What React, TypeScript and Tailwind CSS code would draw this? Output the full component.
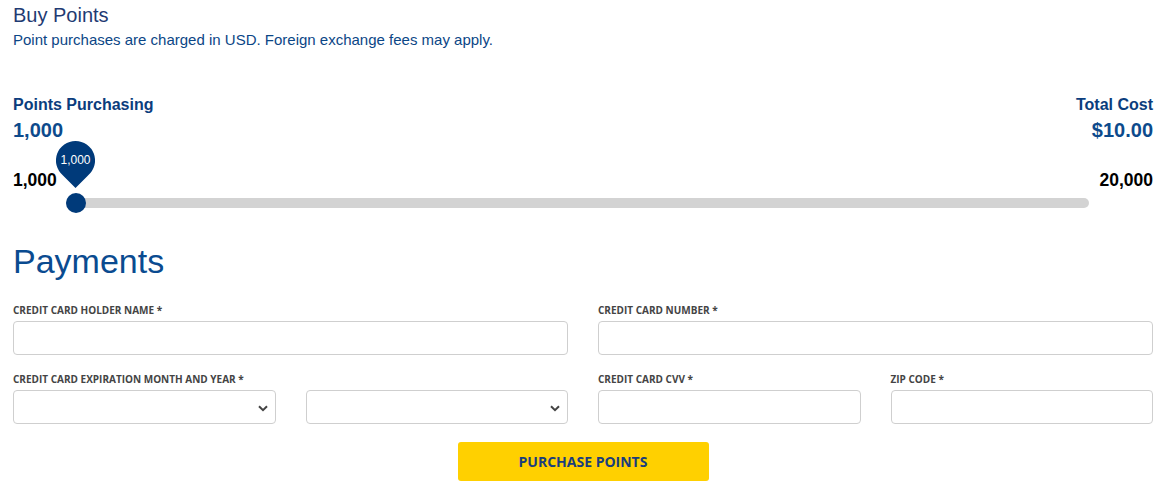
import React from "react";

const labelCls =
  "block text-[10px] font-bold uppercase text-[#444] leading-none mb-[6px] font-['Open_Sans',sans-serif]";
const inputCls =
  "block w-full h-[34px] border border-[#cfcfcf] rounded-[4px] bg-white";

function Chevron() {
  return (
    <svg width="10" height="7" viewBox="0 0 10 7" className="absolute right-[4px] top-[14px]">
      <path d="M1 1.2 L5 5.2 L9 1.2" fill="none" stroke="#444" strokeWidth="2" />
    </svg>
  );
}

function SelectBox() {
  return (
    <div className={"relative " + inputCls}>
      <div className="absolute right-[3px] top-0 h-full w-[14px]">
        <Chevron />
      </div>
    </div>
  );
}

export default function App() {
  return (
    <div className="w-[1176px] h-[498px] bg-white font-['Liberation_Sans',Arial,sans-serif] overflow-hidden">
      <div className="ml-[13px] w-[1140px]">
        <h1 className="text-[20px] leading-[24px] pt-[3px] text-[#1f3b73]">Buy Points</h1>
        <p className="text-[15px] leading-[17px] mt-[4px] text-[#0b4686]">
          Point purchases are charged in USD. Foreign exchange fees may apply.
        </p>

        <div className="flex justify-between mt-[48px]">
          <div>
            <div className="text-[16px] font-bold leading-[18px] text-[#0b3d7d]">Points Purchasing</div>
            <div className="text-[20px] font-bold leading-[22px] mt-[5px] text-[#0d4a8c]">1,000</div>
          </div>
          <div className="text-right">
            <div className="text-[16px] font-bold leading-[18px] text-[#0b3d7d]">Total Cost</div>
            <div className="text-[20px] font-bold leading-[22px] mt-[5px] text-[#0d4a8c]">$10.00</div>
          </div>
        </div>

        <div className="relative mt-[30px]">
          <div className="flex justify-between">
            <span className="text-[17.5px] font-bold leading-[18px] text-black">1,000</span>
            <span className="text-[17.5px] font-bold leading-[18px] text-black">20,000</span>
          </div>
          <div className="relative ml-[53px] mr-[64px] mt-[9px] h-[10px] rounded-full bg-[#d3d3d3]">
            <div className="absolute left-0 top-[-5px] w-[20px] h-[20px] rounded-full bg-[#003a7a]" />
            <div className="absolute left-[-10px] top-[-57px] w-[39px] h-[48px]">
              <svg width="39" height="48" viewBox="0 0 39 48" className="absolute inset-0">
                <path
                  d="M19.5 0 A19.5 19.5 0 0 1 32 34.5 L19.5 47 L7 34.5 A19.5 19.5 0 0 1 19.5 0 Z"
                  fill="#003a7a"
                />
              </svg>
              <div className="absolute left-0 right-0 top-[12px] text-center text-white text-[12px] leading-[14px]">
                1,000
              </div>
            </div>
          </div>
        </div>

        <h2 className="text-[34px] leading-[40px] mt-[33px] text-[#0a4b90]">Payments</h2>

        <div className="grid grid-cols-2 gap-x-[30px] mt-[24px]">
          <div>
            <label className={labelCls}>Credit Card Holder Name *</label>
            <div className={inputCls} />
          </div>
          <div>
            <label className={labelCls}>Credit Card Number *</label>
            <div className={inputCls} />
          </div>
        </div>

        <div className="grid grid-cols-4 gap-x-[30px] mt-[19px]">
          <div>
            <label className={labelCls + " whitespace-nowrap"}>Credit Card Expiration Month and Year *</label>
            <SelectBox />
          </div>
          <div>
            <label className={labelCls}>&nbsp;</label>
            <SelectBox />
          </div>
          <div>
            <label className={labelCls}>Credit Card CVV *</label>
            <div className={inputCls} />
          </div>
          <div>
            <label className={labelCls}>Zip Code *</label>
            <div className={inputCls} />
          </div>
        </div>

        <div className="flex justify-center mt-[18px]">
          <button className="w-[251px] h-[39px] rounded-[3px] bg-[#ffd000] text-[#1a3d7c] text-[14px] font-bold uppercase font-['Open_Sans',sans-serif]">
            Purchase Points
          </button>
        </div>
      </div>
    </div>
  );
}
